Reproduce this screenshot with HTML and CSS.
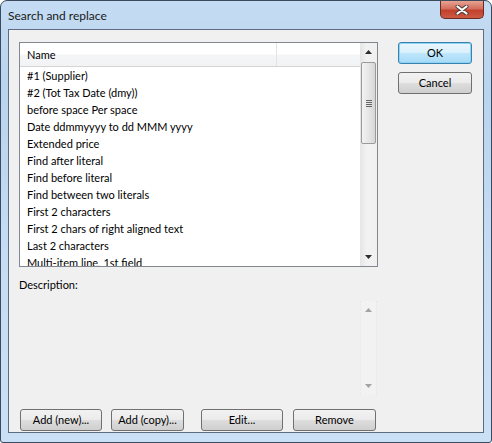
FILE: index.html
```html
<!DOCTYPE html>
<html>
<head>
<meta charset="utf-8">
<link rel="stylesheet" href="styles.css">
</head>
<body>
<div class="window">
  <div class="titlebar">
    <span class="title">Search and replace</span>
    <div class="close">
      <svg width="14" height="10" viewBox="0 0 14 10"><path d="M2.5 1.5 L11.5 8.5 M11.5 1.5 L2.5 8.5" stroke="#4a3b3b" stroke-width="4" stroke-linecap="round"/><path d="M2.5 1.5 L11.5 8.5 M11.5 1.5 L2.5 8.5" stroke="#ffffff" stroke-width="2.2" stroke-linecap="round"/></svg>
    </div>
  </div>
  <div class="client">
    <div class="main">
      <div class="listbox">
        <div class="listview">
          <div class="header">
            <div class="col col-name">Name</div>
            <div class="col col-rest"></div>
          </div>
          <div class="rows">
            <div class="row">#1 (Supplier)</div>
            <div class="row">#2 (Tot Tax Date (dmy))</div>
            <div class="row">before space Per space</div>
            <div class="row">Date ddmmyyyy to dd MMM yyyy</div>
            <div class="row">Extended price</div>
            <div class="row">Find after literal</div>
            <div class="row">Find before literal</div>
            <div class="row">Find between two literals</div>
            <div class="row">First 2 characters</div>
            <div class="row">First 2 chars of right aligned text</div>
            <div class="row">Last 2 characters</div>
            <div class="row">Multi-item line, 1st field</div>
          </div>
        </div>
        <div class="vscroll">
          <div class="arrow up"><svg width="7" height="4" viewBox="0 0 7 4"><path d="M0 4 L3.5 0 L7 4 Z" fill="#2d2d2d"/></svg></div>
          <div class="track">
            <div class="thumb">
              <div class="grip"><i></i><i></i><i></i><i></i></div>
            </div>
          </div>
          <div class="arrow down"><svg width="7" height="4" viewBox="0 0 7 4"><path d="M0 0 L3.5 4 L7 0 Z" fill="#2d2d2d"/></svg></div>
        </div>
      </div>
      <div class="desc-label">Description:</div>
      <div class="desc">
        <div class="desc-text"></div>
        <div class="dscroll">
          <div class="arrow"><svg width="7" height="4" viewBox="0 0 7 4"><path d="M0 4 L3.5 0 L7 4 Z" fill="#a3a3a3"/></svg></div>
          <div class="arrow"><svg width="7" height="4" viewBox="0 0 7 4"><path d="M0 0 L3.5 4 L7 0 Z" fill="#a3a3a3"/></svg></div>
        </div>
      </div>
      <div class="actions">
        <button class="btn btn-new">Add (new)...</button>
        <button class="btn btn-copy">Add (copy)...</button>
        <button class="btn btn-edit">Edit...</button>
        <button class="btn btn-remove">Remove</button>
      </div>
    </div>
    <div class="side">
      <button class="btn btn-side default">OK</button>
      <button class="btn btn-side">Cancel</button>
    </div>
  </div>
</div>
</body>
</html>
```

FILE: styles.css
```css
html, body {
  margin: 0;
  padding: 0;
  background: #ffffff;
}
.window {
  width: 492px;
  height: 443px;
  box-sizing: border-box;
  border: 1px solid #3b4a5c;
  border-radius: 7px 7px 3px 3px;
  background: linear-gradient(180deg, #c4dcf3 0%, #b9d4ef 20%, #c6ddf4 60%, #c9e0f6 100%);
  display: flex;
  flex-direction: column;
  font-family: Lato, "Open Sans", sans-serif;
  font-size: 11px;
  color: #000;
  overflow: hidden;
}
.titlebar {
  height: 28px;
  flex: none;
  display: flex;
  align-items: flex-start;
  justify-content: space-between;
}
.title {
  margin: 7px 0 0 7px;
  font-size: 12px;
  color: #1a1a1a;
}
.close {
  width: 44px;
  height: 18px;
  margin-right: 7px;
  box-sizing: border-box;
  border: 1px solid #6b2a22;
  border-top: none;
  border-radius: 0 0 5px 5px;
  background: linear-gradient(180deg, #e8a393 0%, #d46e5c 45%, #c2402c 55%, #cc5a44 100%);
  display: flex;
  align-items: center;
  justify-content: center;
}
.client {
  flex: none;
  height: 404px;
  margin: 0 7px 0 7px;
  box-sizing: border-box;
  border: 1px solid #5d6d80;
  background: #f0f0f0;
  display: flex;
}
.main {
  width: 359px;
  margin: 12px 0 0 10px;
  display: flex;
  flex-direction: column;
}
.listbox {
  height: 225px;
  box-sizing: border-box;
  border: 1px solid #828790;
  background: #fff;
  display: flex;
}
.listview {
  flex: 1;
  overflow: hidden;
}
.header {
  height: 23px;
  display: flex;
  border-bottom: 1px solid #d5d5d5;
  background: linear-gradient(180deg, #ffffff 0%, #ffffff 48%, #f4f5f7 52%, #f2f3f5 100%);
}
.col {
  display: flex;
  align-items: center;
}
.col-name {
  width: 249px;
  padding-left: 7px;
  border-right: 1px solid #e2e3e5;
}
.col-rest {
  flex: 1;
}
.row {
  height: 17px;
  line-height: 17px;
  padding-left: 7px;
  white-space: nowrap;
}
.vscroll {
  width: 17px;
  display: flex;
  flex-direction: column;
  background: linear-gradient(90deg, #e5e5e5, #f2f2f2 40%, #f0f0f0);
}
.vscroll .arrow {
  height: 18px;
  display: flex;
  align-items: center;
  justify-content: center;
}
.track {
  flex: 1;
  padding-top: 1px;
}
.thumb {
  margin: 0 1px;
  height: 82px;
  box-sizing: border-box;
  border: 1px solid #9a9a9a;
  border-radius: 2px;
  background: linear-gradient(90deg, #f2f2f2 0%, #e6e6e6 50%, #d6d6d6 100%);
  display: flex;
  align-items: center;
  justify-content: center;
}
.grip {
  display: flex;
  flex-direction: column;
  gap: 1px;
}
.grip i {
  display: block;
  width: 6px;
  height: 1px;
  background: #646464;
}
.desc-label {
  margin-top: 9px;
  height: 17px;
  line-height: 17px;
}
.desc {
  margin-top: 8px;
  height: 94px;
  display: flex;
}
.desc-text {
  flex: 1;
}
.dscroll {
  width: 15px;
  margin-right: 1px;
  display: flex;
  flex-direction: column;
  justify-content: space-between;
  background: #f2f2f2;
  border-left: 1px dotted #e6e6e6;
  border-right: 1px dotted #e6e6e6;
}
.dscroll .arrow {
  height: 18px;
  display: flex;
  align-items: center;
  justify-content: center;
}
.actions {
  margin-top: 14px;
  display: flex;
}
.btn {
  height: 22px;
  box-sizing: border-box;
  padding: 0;
  border: 1px solid #707070;
  border-radius: 3px;
  background: linear-gradient(180deg, #f2f2f2 0%, #ebebeb 48%, #dddddd 52%, #cfcfcf 100%);
  font-family: Lato, "Open Sans", sans-serif;
  font-size: 11px;
  color: #000;
  line-height: 18px;
}
.btn-new { width: 82px; margin-left: 1px; }
.btn-copy { width: 73px; margin-left: 9px; }
.btn-edit { width: 82px; margin-left: 17px; }
.btn-remove { width: 83px; margin-left: 10px; }
.side {
  margin: 12px 0 0 20px;
  display: flex;
  flex-direction: column;
  gap: 8px;
}
.btn-side {
  width: 74px;
}
.btn.default {
  border-color: #3c7fb1;
  box-shadow: inset 0 0 0 1px #8ad5f2;
  background: linear-gradient(180deg, #eaf6fd 0%, #d9f0fc 48%, #bee6fd 52%, #a7d9f5 100%);
}
```
